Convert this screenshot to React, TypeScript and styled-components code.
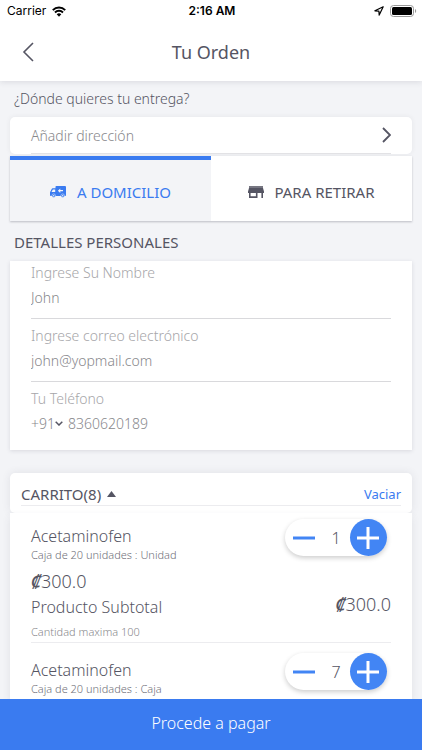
import React, { useState } from "react";
import styled, { createGlobalStyle } from "styled-components";

const blue = "#3a7bf0";
const ink = "#555563";
const muted = "#88888c";

const GlobalStyle = createGlobalStyle`
  *, *::before, *::after { box-sizing: border-box; }
  body { margin: 0; background: #f3f4f7; }
  body, button, input, select { font-family: "Noto Sans", "Open Sans", sans-serif; color: ${ink}; }
  button, input, select { border: 0; padding: 0; margin: 0; background: none; }
  button { cursor: pointer; }
  h1, h2, h3, p { margin: 0; font-weight: 400; }
  svg { display: block; flex: none; }
`;

const Screen = styled.div`
  display: flex;
  flex-direction: column;
  height: 100vh;
  overflow: hidden;
`;

const Top = styled.header`
  background: #fff;
  box-shadow: 0 1px 6px rgba(60, 60, 80, 0.14);
  z-index: 1;
`;

const StatusBar = styled.div`
  display: grid;
  grid-template-columns: 1fr auto 1fr;
  align-items: center;
  height: 22px;
  padding: 0 5px 0 7px;
  color: #000;
  font: 400 12px/22px Inter, sans-serif;
`;

const StatusGroup = styled.div<{ $end?: boolean }>`
  display: flex;
  align-items: center;
  justify-content: ${(p) => (p.$end ? "flex-end" : "flex-start")};
  gap: 6px;
`;

const Clock = styled.span`
  font-weight: 600;
`;

const TitleBar = styled.div`
  display: grid;
  grid-template-columns: 40px 1fr 40px;
  align-items: center;
  height: 59px;
  padding: 0 15px;
`;

const BackButton = styled.button`
  display: flex;
  align-items: center;
  height: 40px;
  padding-left: 7px;
`;

const Title = styled.h1`
  font-size: 18px;
  line-height: 24px;
  text-align: center;
`;

const Content = styled.main`
  flex: 1;
  min-height: 0;
  display: flex;
  flex-direction: column;
  padding: 0 10px;
  overflow-y: auto;
  scrollbar-width: none;
`;

const SectionTitle = styled.h2<{ $caps?: boolean }>`
  flex: none;
  padding: ${(p) => (p.$caps ? "11px 4px 9px" : "8px 4px")};
  font-size: ${(p) => (p.$caps ? "15px" : "14px")};
  font-weight: ${(p) => (p.$caps ? 400 : 300)};
  line-height: 20px;
`;

const AddressButton = styled.button`
  flex: none;
  height: 37px;
  padding: 0 21px;
  border-radius: 5px;
  background: #fff;
  box-shadow: 0 0 5px rgba(60, 60, 80, 0.08);
  text-align: left;
`;

const AddressLine = styled.span`
  display: flex;
  align-items: center;
  justify-content: space-between;
  height: 36px;
  border-bottom: 1px solid #e2e2e5;
  font-size: 14px;
  font-weight: 300;
  color: ${muted};
`;

const Tabs = styled.div`
  flex: none;
  display: grid;
  grid-template-columns: 1fr 1fr;
  margin-top: 2px;
  box-shadow: 0 1px 2px rgba(60, 60, 80, 0.3);
`;

const Tab = styled.button<{ $active: boolean }>`
  display: flex;
  align-items: center;
  justify-content: center;
  gap: 10px;
  height: 65px;
  padding-top: 3px;
  border-top: 4px solid ${(p) => (p.$active ? blue : "#fff")};
  background: ${(p) => (p.$active ? "#f3f4f7" : "#fff")};
  color: ${(p) => (p.$active ? blue : ink)};
  font-size: 15px;
  line-height: 20px;
`;

const DetailsCard = styled.form`
  flex: none;
  display: flex;
  flex-direction: column;
  gap: 5px;
  padding: 0 21px 5px;
  background: #fff;
  box-shadow: 0 1px 4px rgba(60, 60, 80, 0.14);
`;

const Field = styled.div<{ $last?: boolean }>`
  padding-bottom: 9px;
  border-bottom: 1px solid ${(p) => (p.$last ? "transparent" : "#d9d9dc")};
`;

const FieldLabel = styled.label`
  display: block;
  font-size: 14px;
  font-weight: 300;
  line-height: 24px;
  color: #a6a6a9;
`;

const FieldInput = styled.input`
  display: block;
  flex: 1;
  width: 100%;
  min-width: 0;
  height: 24px;
  font-size: 14px;
  font-weight: 300;
  color: ${muted};
  outline-color: ${blue};
`;

const PhoneRow = styled.div`
  display: flex;
  align-items: center;
  gap: 5px;
`;

const CodePicker = styled.div`
  display: flex;
  align-items: center;
`;

const CodeSelect = styled.select`
  appearance: none;
  height: 24px;
  font-size: 14px;
  font-weight: 300;
  color: ${muted};
`;

const CartHeader = styled.div`
  flex: none;
  margin-top: 23px;
  padding: 10px 11px 7px;
  border-radius: 5px;
  background: #fff;
  box-shadow: 0 0 8px rgba(60, 60, 80, 0.1);
`;

const CartHeaderLine = styled.div`
  display: flex;
  align-items: center;
  justify-content: space-between;
  height: 23px;
  border-bottom: 1px solid #ececef;
`;

const CartToggle = styled.button`
  display: flex;
  align-items: center;
  gap: 6px;
  font-size: 15px;
  line-height: 22px;
`;

const ClearButton = styled.button`
  font-size: 13px;
  line-height: 22px;
  color: ${blue};
`;

const CartList = styled.ul`
  flex: 1 0 auto;
  display: flex;
  flex-direction: column;
  gap: 4px;
  margin: 0;
  padding: 0 21px;
  list-style: none;
  background: #fff;
  box-shadow: 0 4px 8px rgba(60, 60, 80, 0.1);
`;

const CartItem = styled.li`
  padding-top: 6px;
`;

const ItemTop = styled.div`
  display: flex;
  align-items: flex-start;
  justify-content: space-between;
  padding-right: 4px;
`;

const ItemText = styled.div`
  padding-top: 6px;
`;

const ItemName = styled.h3`
  font-size: 16px;
  font-weight: 300;
  line-height: 22px;
`;

const SmallText = styled.p<{ $faint?: boolean }>`
  font-size: 11px;
  font-weight: 300;
  line-height: 15px;
  color: ${(p) => (p.$faint ? muted : "#6f6f79")};
`;

const Stepper = styled.div`
  display: flex;
  align-items: center;
  justify-content: space-between;
  width: 102px;
  height: 37px;
  border-radius: 19px;
  background: #fff;
  box-shadow: 0 2px 5px rgba(0, 0, 0, 0.2);
`;

const StepButton = styled.button<{ $filled?: boolean }>`
  display: flex;
  align-items: center;
  justify-content: center;
  width: 37px;
  height: 37px;
  border-radius: 50%;
  background: ${(p) => (p.$filled ? "#4285f4" : "transparent")};
`;

const Quantity = styled.output`
  font-size: 16px;
  font-weight: 300;
  line-height: 20px;
`;

const Totals = styled.div`
  display: flex;
  align-items: flex-end;
  justify-content: space-between;
  padding: 8px 0 6px;
`;

const TotalsColumn = styled.div<{ $raised?: boolean }>`
  display: grid;
  gap: 4px;
  padding-bottom: ${(p) => (p.$raised ? "3px" : "0")};
  font-size: 16px;
  font-weight: 300;
  line-height: 22px;
`;

const Amount = styled.span`
  font-size: 18px;
`;

const Colon = styled.span`
  font-style: italic;
  font-weight: 500;
`;

const ItemEnd = styled.div`
  padding-bottom: 3px;
  border-bottom: 1px solid #ececef;
`;

const PayButton = styled.button`
  flex: none;
  height: 51px;
  padding-bottom: 3px;
  background: ${blue};
  color: #fff;
  font-size: 16px;
  font-weight: 300;
  z-index: 1;
`;

const WifiIcon = () => (
  <svg width="14" height="11" viewBox="0 0 14 11" fill="none" stroke="#000" strokeWidth="2">
    <path d="M.8 4.1a8.8 8.8 0 0 1 12.4 0M3 6.5a5.7 5.7 0 0 1 8 0" />
    <path d="M4.7 8.3a3.3 3.3 0 0 1 4.6 0L7 10.8z" fill="#000" stroke="none" />
  </svg>
);

const LocationIcon = () => (
  <svg width="10" height="10" viewBox="0 0 10 10" fill="none" stroke="#000" strokeWidth="1.2" strokeLinejoin="round">
    <path d="M9.2.8.9 4.8l4 .3.3 4z" />
  </svg>
);

const BatteryIcon = () => (
  <svg width="27" height="12" viewBox="0 0 27 12">
    <rect x=".5" y=".5" width="23" height="11" rx="3" fill="none" stroke="#999" />
    <rect x="2" y="2" width="20" height="8" rx="1.5" />
    <path d="M25 4v4c1.6-.6 1.6-3.4 0-4z" fill="#999" />
  </svg>
);

const Chevron = ({ left }: { left?: boolean }) => (
  <svg
    width={left ? 12 : 9}
    height={left ? 20 : 16}
    viewBox={left ? "0 0 12 20" : "0 0 9 16"}
    fill="none"
    stroke={ink}
    strokeWidth={left ? 1.6 : 1.8}
  >
    <path d={left ? "M11 1 2 10l9 9" : "M1 1l7 7-7 7"} />
  </svg>
);

const TruckIcon = () => (
  <svg width="17" height="12" viewBox="0 0 17 12" fill="currentColor">
    <path
      fillRule="evenodd"
      d="M6.3 0H15a1 1 0 0 1 1 1v8.3a.8.8 0 0 1-.8.8H.8A.8.8 0 0 1 0 9.3V6.2l1.7-3.3c.2-.4.5-.6.9-.6h2.900V.8c0-.5.3-.8.8-.8zM2.900 3.500 1.500 6.100h3.700V3.500zM10.300 2.500 7.900 4.700l2.400 2.200V5.300H13V4.100h-2.700z"
    />
    <circle cx="3.7" cy="9.7" r="1.8" stroke="#f3f4f7" strokeWidth=".5" />
    <circle cx="12.7" cy="9.7" r="1.8" stroke="#f3f4f7" strokeWidth=".5" />
    <circle cx="3.7" cy="9.7" r=".7" fill="#f3f4f7" />
    <circle cx="12.7" cy="9.7" r=".7" fill="#f3f4f7" />
  </svg>
);

const StoreIcon = () => (
  <svg width="16" height="12" viewBox="0 0 16 12" fill="currentColor">
    <path d="M1 0h14v2H1z" opacity=".8" />
    <path
      fillRule="evenodd"
      d="M1 2h14l1 3.500V7h-1v5h-1.600V7H9.500v5H1V7H0V5.500zM2.600 7v3.300h5.300V7z"
    />
  </svg>
);

const CaretDown = () => (
  <svg width="8" height="5" viewBox="0 0 8 5" fill="none" stroke={ink} strokeWidth="1.5">
    <path d="M.7.7 4 4 7.300.7" />
  </svg>
);

const TriangleUp = () => (
  <svg width="9" height="6" viewBox="0 0 9 6" fill={ink}>
    <path d="M4.500 0 9 6H0z" />
  </svg>
);

const StepIcon = ({ plus }: { plus?: boolean }) => (
  <svg width="22" height="22" viewBox="0 0 22 22" fill="none" stroke={plus ? "#fff" : "#4285f4"} strokeWidth="3">
    <path d={plus ? "M0 11h22M11 0v22" : "M0 11h22"} />
  </svg>
);

const Price = ({ value }: { value: string }) => (
  <Amount>
    <Colon>₡</Colon>
    {value}
  </Amount>
);

type Product = {
  id: number;
  name: string;
  pack: string;
  quantity: number;
  price?: string;
  limit?: string;
};

const products: Product[] = [
  {
    id: 1,
    name: "Acetaminofen",
    pack: "Caja de 20 unidades : Unidad",
    quantity: 1,
    price: "300.0",
    limit: "Cantidad maxima 100",
  },
  { id: 2, name: "Acetaminofen", pack: "Caja de 20 unidades : Caja", quantity: 7 },
];

const CartRow = ({ product }: { product: Product }) => {
  const [quantity, setQuantity] = useState(product.quantity);
  return (
    <CartItem>
      <ItemTop>
        <ItemText>
          <ItemName>{product.name}</ItemName>
          <SmallText>{product.pack}</SmallText>
        </ItemText>
        <Stepper>
          <StepButton type="button" aria-label="Quitar uno" onClick={() => setQuantity(Math.max(0, quantity - 1))}>
            <StepIcon />
          </StepButton>
          <Quantity>{quantity}</Quantity>
          <StepButton type="button" $filled aria-label="Agregar uno" onClick={() => setQuantity(quantity + 1)}>
            <StepIcon plus />
          </StepButton>
        </Stepper>
      </ItemTop>
      {product.price && (
        <ItemEnd>
          <Totals>
            <TotalsColumn>
              <Price value={product.price} />
              <span>Producto Subtotal</span>
            </TotalsColumn>
            <TotalsColumn $raised>
              <Price value={product.price} />
            </TotalsColumn>
          </Totals>
          <SmallText $faint>{product.limit}</SmallText>
        </ItemEnd>
      )}
    </CartItem>
  );
};

export default function App() {
  const [delivery, setDelivery] = useState(true);
  return (
    <Screen>
      <GlobalStyle />
      <Top>
        <StatusBar>
          <StatusGroup>
            <span>Carrier</span>
            <WifiIcon />
          </StatusGroup>
          <Clock>2:16 AM</Clock>
          <StatusGroup $end>
            <LocationIcon />
            <BatteryIcon />
          </StatusGroup>
        </StatusBar>
        <TitleBar>
          <BackButton type="button" aria-label="Volver">
            <Chevron left />
          </BackButton>
          <Title>Tu Orden</Title>
        </TitleBar>
      </Top>
      <Content>
        <SectionTitle>¿Dónde quieres tu entrega?</SectionTitle>
        <AddressButton type="button">
          <AddressLine>
            Añadir dirección
            <Chevron />
          </AddressLine>
        </AddressButton>
        <Tabs role="tablist">
          <Tab type="button" role="tab" aria-selected={delivery} $active={delivery} onClick={() => setDelivery(true)}>
            <TruckIcon />
            A DOMICILIO
          </Tab>
          <Tab type="button" role="tab" aria-selected={!delivery} $active={!delivery} onClick={() => setDelivery(false)}>
            <StoreIcon />
            PARA RETIRAR
          </Tab>
        </Tabs>
        <SectionTitle $caps>DETALLES PERSONALES</SectionTitle>
        <DetailsCard>
          <Field>
            <FieldLabel htmlFor="name">Ingrese Su Nombre</FieldLabel>
            <FieldInput id="name" defaultValue="John" />
          </Field>
          <Field>
            <FieldLabel htmlFor="email">Ingrese correo electrónico</FieldLabel>
            <FieldInput id="email" type="email" defaultValue="john@yopmail.com" />
          </Field>
          <Field $last>
            <FieldLabel htmlFor="phone">Tu Teléfono</FieldLabel>
            <PhoneRow>
              <CodePicker>
                <CodeSelect aria-label="Código de país" defaultValue="+91">
                  <option>+91</option>
                </CodeSelect>
                <CaretDown />
              </CodePicker>
              <FieldInput id="phone" type="tel" defaultValue="8360620189" />
            </PhoneRow>
          </Field>
        </DetailsCard>
        <CartHeader>
          <CartHeaderLine>
            <CartToggle type="button" aria-expanded="true">
              CARRITO(8)
              <TriangleUp />
            </CartToggle>
            <ClearButton type="button">Vaciar</ClearButton>
          </CartHeaderLine>
        </CartHeader>
        <CartList>
          {products.map((product) => (
            <CartRow key={product.id} product={product} />
          ))}
        </CartList>
      </Content>
      <PayButton type="button">Procede a pagar</PayButton>
    </Screen>
  );
}
